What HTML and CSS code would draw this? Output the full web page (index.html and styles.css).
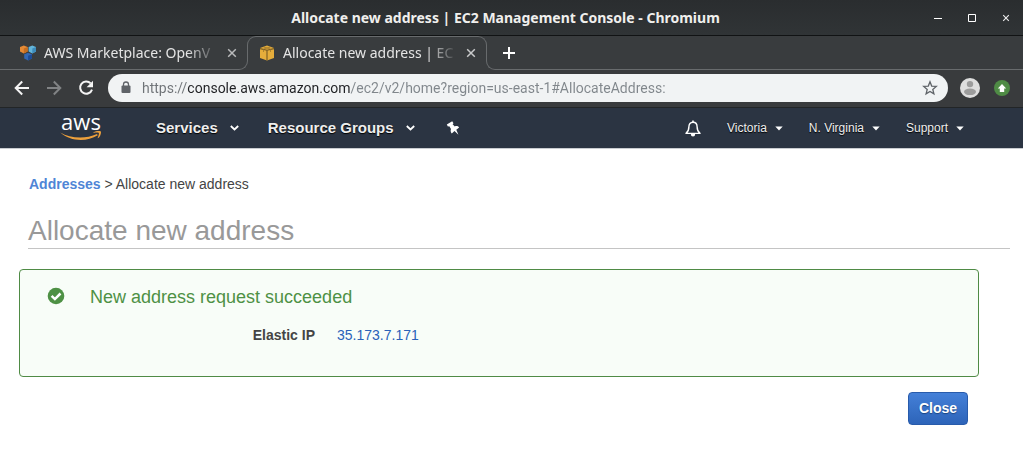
FILE: index.html
```html
<!DOCTYPE html>
<html lang="en">
<head>
<meta charset="utf-8">
<meta name="viewport" content="width=device-width, initial-scale=1">
<title>Allocate new address | EC2 Management Console</title>
<link rel="stylesheet" href="styles.css">
</head>
<body>
<header class="titlebar">
  <span class="window-title">Allocate new address | EC2 Management Console - Chromium</span>
  <div class="window-controls">
    <button type="button" class="icon-button" aria-label="Minimize"><svg width="10" height="10" viewBox="0 0 10 10"><path d="M1 5.5h8" stroke="#fff"/></svg></button>
    <button type="button" class="icon-button" aria-label="Maximize"><svg width="10" height="10" viewBox="0 0 10 10"><path d="M1.5 1.5h7v7h-7z" fill="none" stroke="#fff"/></svg></button>
    <button type="button" class="icon-button" aria-label="Close window"><svg width="10" height="10" viewBox="0 0 10 10"><path d="M2.2 2.2l5.6 5.6M7.8 2.2L2.2 7.8" stroke="#eee" stroke-width="1.1"/></svg></button>
  </div>
</header>

<div class="tabstrip">
  <div class="tab tab-idle">
    <svg width="16" height="16" viewBox="0 0 16 16" aria-hidden="true">
      <path d="M0 2l3.800-1.400L7.600 2v4.500L3.800 8.400 0 6.500z" fill="#e58a35"/><path d="M3.800 3.500L7.600 2v4.500L3.800 8.400z" fill="#c56e22"/>
      <path d="M8.600 2l3.700-1.400L16 2v4.500l-3.700 1.900-3.700-1.900z" fill="#64b5da"/><path d="M12.300 3.500L16 2v4.500l-3.700 1.900z" fill="#3d8cbc"/>
      <path d="M4.200 9.200l3.900-1.400L12 9.200v4.400l-3.900 1.900-3.900-1.900z" fill="#3368b4"/><path d="M8.100 10.800L12 9.200v4.400l-3.900 1.900z" fill="#1d4b94"/>
    </svg>
    <span class="tab-title">AWS Marketplace: OpenV</span>
    <button type="button" class="icon-button" aria-label="Close tab"><svg width="10" height="10" viewBox="0 0 10 10"><path d="M1.200 1.200l7.600 7.600M8.800 1.200L1.200 8.800" stroke="#b9babb" stroke-width="1.500"/></svg></button>
  </div>
  <div class="tab tab-active">
    <svg width="16" height="16" viewBox="0 0 16 16" aria-hidden="true">
      <path d="M1 3l7-2.500L15 3v10l-7 2.500L1 13z" fill="#e5ad3b"/>
      <path d="M1 3.600l7 1.600 7-1.600M8 5.200v10" fill="none" stroke="#765a24" stroke-width="1.100"/>
      <path d="M4.500 2l7 2v3M11.500 2l-7 2v3" fill="none" stroke="#98732b" stroke-width=".7"/>
    </svg>
    <span class="tab-title">Allocate new address | EC</span>
    <button type="button" class="icon-button" aria-label="Close tab"><svg width="10" height="10" viewBox="0 0 10 10"><path d="M1.200 1.200l7.600 7.600M8.800 1.200L1.200 8.800" stroke="#c9cacb" stroke-width="1.500"/></svg></button>
  </div>
  <div class="tab-rest">
    <button type="button" class="icon-button" aria-label="New tab"><svg width="12" height="12" viewBox="0 0 12 12"><path d="M6 0v12M0 6h12" stroke="#fff" stroke-width="2"/></svg></button>
  </div>
</div>

<div class="toolbar">
  <div class="history">
    <button type="button" class="icon-button" aria-label="Back"><svg width="16" height="16" viewBox="0 0 16 16"><path d="M15 8H2M8.200 1.500L1.700 8l6.500 6.500" fill="none" stroke="#f4f4f4" stroke-width="2"/></svg></button>
    <button type="button" class="icon-button" aria-label="Forward"><svg width="16" height="16" viewBox="0 0 16 16"><path d="M1 8h13M7.800 1.500L14.300 8l-6.500 6.500" fill="none" stroke="#818385" stroke-width="2"/></svg></button>
    <button type="button" class="icon-button" aria-label="Reload"><svg width="16" height="16" viewBox="0 0 16 16"><path d="M12.700 3.400A6.100 6.100 0 1 0 14 9.600" fill="none" stroke="#f4f4f4" stroke-width="2"/><path d="M15 .8v6.400H8.600z" fill="#f4f4f4"/></svg></button>
  </div>
  <div class="omnibox">
    <svg width="10" height="13" viewBox="0 0 10 13" aria-hidden="true"><path d="M2.500 5V3.500a2.500 2.500 0 0 1 5 0V5" fill="none" stroke="#5f6368" stroke-width="1.300"/><rect x="0.500" y="4.600" width="9" height="7.400" rx="1" fill="#5f6368"/></svg>
    <input class="url" type="text" aria-label="Address" spellcheck="false" value="https://console.aws.amazon.com/ec2/v2/home?region=us-east-1#AllocateAddress:">
    <button type="button" class="icon-button" aria-label="Bookmark this page"><svg width="16" height="16" viewBox="0 0 16 16"><path d="M8 1.800l1.700 4.300 4.600.3-3.500 3 1.100 4.500L8 11.500l-3.900 2.400 1.100-4.500-3.500-3 4.600-.3z" fill="none" stroke="#5f6368" stroke-width="1.300"/></svg></button>
  </div>
  <button type="button" class="icon-button" aria-label="Profile"><svg width="20" height="20" viewBox="0 0 20 20"><circle cx="10" cy="10" r="10" fill="#dedede"/><circle cx="10" cy="6.100" r="3.200" fill="#9c9c9c"/><ellipse cx="10" cy="13.800" rx="6" ry="3.300" fill="#9c9c9c"/></svg></button>
  <button type="button" class="icon-button" aria-label="Update available"><svg width="16" height="16" viewBox="0 0 16 16"><circle cx="8" cy="8" r="8" fill="#4f8b45"/><path d="M8 3.900L12.200 8.500H10.200V12H5.800V8.500H3.800z" fill="#fff"/></svg></button>
</div>

<nav class="aws-nav" aria-label="AWS console">
  <a class="logo" href="#" aria-label="AWS home">
    <span class="logo-word">aws</span>
    <svg class="logo-smile" width="42" height="10" viewBox="0 0 42 10" aria-hidden="true"><path d="M.3 1.500C10 7.300 25 8.500 37 3l.8 1.300C26 11.500 10 10.200.3 1.500z" fill="#eda03c"/><path d="M33.500 1.300c2.500-1.500 6.500-1.500 7.300-.8.700 1-.5 4.900-2.500 6.600-.5.200-.7 0-.5-.5.600-1.500 1.400-3.900 1-4.700-.7-.7-3.300-.3-5-.1-.6 0-.7-.2-.3-.5z" fill="#eda03c"/></svg>
  </a>
  <button type="button" class="nav-button nav-main">Services <svg width="9" height="6" viewBox="0 0 9 6" aria-hidden="true"><path d="M.8 1l3.700 3.500L8.200 1" fill="none" stroke="#fff" stroke-width="1.800"/></svg></button>
  <button type="button" class="nav-button nav-main">Resource Groups <svg width="9" height="6" viewBox="0 0 9 6" aria-hidden="true"><path d="M.8 1l3.700 3.500L8.200 1" fill="none" stroke="#fff" stroke-width="1.800"/></svg></button>
  <button type="button" class="icon-button pin" aria-label="Pin shortcuts"><svg width="14" height="14" viewBox="0 0 14 14"><path d="M.8 3.600L6.200.3l1.300 1.900-.9 1 2.200 2.200c1.700-.6 3.300-.2 4.300 1L10.300 8.800l2.100 5-3.900-3.900-2.700 2.600C4.600 11.200 4.300 9.500 5 8L3.300 5.200l-1.400.3z" fill="#fff"/></svg></button>
  <div class="nav-right">
    <button type="button" class="icon-button" aria-label="Notifications"><svg width="16" height="17" viewBox="0 0 16 17"><path d="M8 2.200C5.300 2.200 3.900 4.100 3.900 6.800c0 3.700-1.100 5.300-2.900 6.600h14c-1.800-1.300-2.900-2.900-2.900-6.600C12.100 4.100 10.700 2.200 8 2.200z" fill="none" stroke="#fff" stroke-width="1.400" stroke-linejoin="round"/><path d="M8 .5v2" stroke="#fff" stroke-width="1.600"/><path d="M5.800 14h4.400a2.200 2.500 0 0 1-4.400 0z" fill="#fff"/></svg></button>
    <button type="button" class="nav-button">Victoria <svg width="8" height="5" viewBox="0 0 8 5" aria-hidden="true"><path d="M.3.600h7.400L4 4.600z" fill="#fff"/></svg></button>
    <button type="button" class="nav-button">N. Virginia <svg width="8" height="5" viewBox="0 0 8 5" aria-hidden="true"><path d="M.3.600h7.400L4 4.600z" fill="#fff"/></svg></button>
    <button type="button" class="nav-button">Support <svg width="8" height="5" viewBox="0 0 8 5" aria-hidden="true"><path d="M.3.600h7.400L4 4.600z" fill="#fff"/></svg></button>
  </div>
</nav>

<main class="page">
  <div class="breadcrumb"><a href="#">Addresses</a> &gt; Allocate new address</div>
  <h1 class="heading">Allocate new address</h1>
  <section class="notice">
    <svg class="notice-icon" width="18" height="18" viewBox="0 0 18 18" aria-hidden="true"><circle cx="9" cy="9" r="8.300" fill="#4e9145"/><path d="M4.600 8.800l3.300 3.300 5.600-5.600" fill="none" stroke="#fff" stroke-width="2.500"/></svg>
    <div class="notice-body">
      <h2 class="notice-title">New address request succeeded</h2>
      <dl class="result"><dt>Elastic IP</dt><dd><a href="#">35.173.7.171</a></dd></dl>
    </div>
  </section>
  <div class="actions"><button type="button" class="primary">Close</button></div>
</main>
</body>
</html>
```
FILE: styles.css
```css
* { box-sizing: border-box; }

body {
  margin: 0;
  background: #fff;
  color: #444;
  font: 14px/20px "Liberation Sans", Arial, sans-serif;
}

svg { display: block; flex: none; }

button { font: inherit; cursor: pointer; }

.icon-button {
  display: flex;
  flex: none;
  padding: 0;
  border: 0;
  background: none;
}

/* Window frame */
.titlebar {
  display: grid;
  grid-template-columns: 1fr auto 1fr;
  align-items: center;
  height: 36px;
  padding-right: 12px;
  border-bottom: 1px solid #111314;
  background: linear-gradient(#2a2d2f, #303436);
  color: #f0efed;
  font: bold 14px/20px "Noto Sans", sans-serif;
}

.window-title { grid-column: 2; }

.window-controls {
  display: flex;
  justify-content: flex-end;
  gap: 24px;
}

.tabstrip {
  display: flex;
  height: 34px;
  background: #393c3e;
  color: #e4e4e4;
  font: 14px/20px "Noto Sans", sans-serif;
}

.tab, .tab-rest {
  position: relative;
  display: flex;
  align-items: center;
}

.tab-idle {
  width: 248px;
  padding: 0 11px 0 20px;
}

.tab-active {
  width: 240px;
  margin-left: -1px;
  padding: 0 11px 0 12px;
}

.tab-rest {
  flex: 1;
  margin-left: -1px;
  padding-left: 17px;
}

.tab-idle::after, .tab-rest::after {
  content: "";
  position: absolute;
  inset: auto 0 0;
  height: 18px;
  border: 0 solid #686b6d;
  border-bottom-width: 1px;
  pointer-events: none;
}

.tab-idle::after { border-right-width: 1px; border-bottom-right-radius: 9px; }
.tab-rest::after { border-left-width: 1px; border-bottom-left-radius: 9px; }

.tab-active::before {
  content: "";
  position: absolute;
  inset: 0 0 auto;
  height: 16px;
  border: 1px solid #686b6d;
  border-bottom: 0;
  border-radius: 9px 9px 0 0;
}

.tab-title {
  flex: 1;
  min-width: 0;
  margin: 0 8px;
  white-space: nowrap;
  -webkit-mask-image: linear-gradient(to left, transparent, #000 32px);
  mask-image: linear-gradient(to left, transparent, #000 32px);
}

.toolbar {
  display: flex;
  align-items: center;
  gap: 12px;
  height: 38px;
  padding: 0 13px 2px 14px;
  border-bottom: 1px solid #222527;
  background: #393b3d;
}

.toolbar > :last-child { margin-left: 2px; }

.history { display: flex; gap: 16px; margin-right: 2px; }

.omnibox {
  display: flex;
  flex: 1;
  align-items: center;
  gap: 11px;
  height: 28px;
  padding: 0 10px 0 13px;
  border-radius: 14px;
  background: #f1f3f4;
}

.url {
  flex: 1;
  min-width: 0;
  padding: 0;
  border: 0;
  outline: 0;
  background: linear-gradient(90deg, #6f7377 45px, #202124 45px, #202124 208px, #80868b 208px);
  -webkit-background-clip: text;
  background-clip: text;
  color: transparent;
  caret-color: #202124;
  font: 14px/24px Roboto, sans-serif;
}

/* Console navigation */
.aws-nav {
  display: flex;
  align-items: center;
  height: 41px;
  padding: 0 59px 0 60px;
  border-bottom: 1px solid #c9ccd0;
  background: #2b3442;
  color: #f2f2f2;
}

.logo {
  display: flex;
  flex-direction: column;
  width: 42px;
  margin: 0 54px 2px 0;
  color: #fff;
  text-align: center;
  text-decoration: none;
}

.logo-word { font: 22px/16px "Open Sans", sans-serif; padding-bottom: 2px; }

.nav-button {
  display: flex;
  align-items: center;
  gap: 8px;
  padding: 0;
  border: 0;
  background: none;
  color: #eee;
  font-size: 12px;
  text-shadow: 0 1px 1px #000;
  white-space: nowrap;
}

.nav-main {
  gap: 12px;
  margin-right: 29px;
  font-size: 15px;
  font-weight: bold;
}

.pin { margin-left: 2px; }

.nav-right {
  display: flex;
  align-items: center;
  gap: 26px;
  margin-left: auto;
}

/* Page content */
.page { padding: 25px 13px 24px 28px; }

.breadcrumb { padding-left: 1px; }

a { color: #2a62b8; text-decoration: none; }
.breadcrumb a { color: #4f85d6; font-weight: bold; }

.heading {
  margin: 20px 0;
  border-bottom: 1px solid #c4c4c4;
  color: #999;
  font-size: 28px;
  font-weight: normal;
  line-height: 34px;
}

.notice {
  display: flex;
  min-height: 108px;
  margin: 0 31px 0 -9px;
  padding: 17px 27px;
  border: 1px solid #4f8b45;
  border-radius: 4px;
  background: #f8fdf8;
}

.notice-icon { margin-right: 25px; }

.notice-title {
  margin: 0 0 18px;
  color: #4e9145;
  font-size: 18px;
  font-weight: normal;
  line-height: 20px;
}

.result {
  display: grid;
  grid-template-columns: 225px auto;
  gap: 22px;
  margin: 0;
}

.result dt { font-weight: bold; text-align: right; }
.result dd { margin: 0; }

.actions {
  display: flex;
  justify-content: flex-end;
  margin: 15px 42px 0 0;
}

.primary {
  padding: 5px 10px 6px;
  border: 1px solid #285bab;
  border-radius: 4px;
  background: linear-gradient(#4480d8, #2d64b9);
  color: #fff;
  font-weight: bold;
  text-shadow: 0 1px 1px #1b4583;
}
```
